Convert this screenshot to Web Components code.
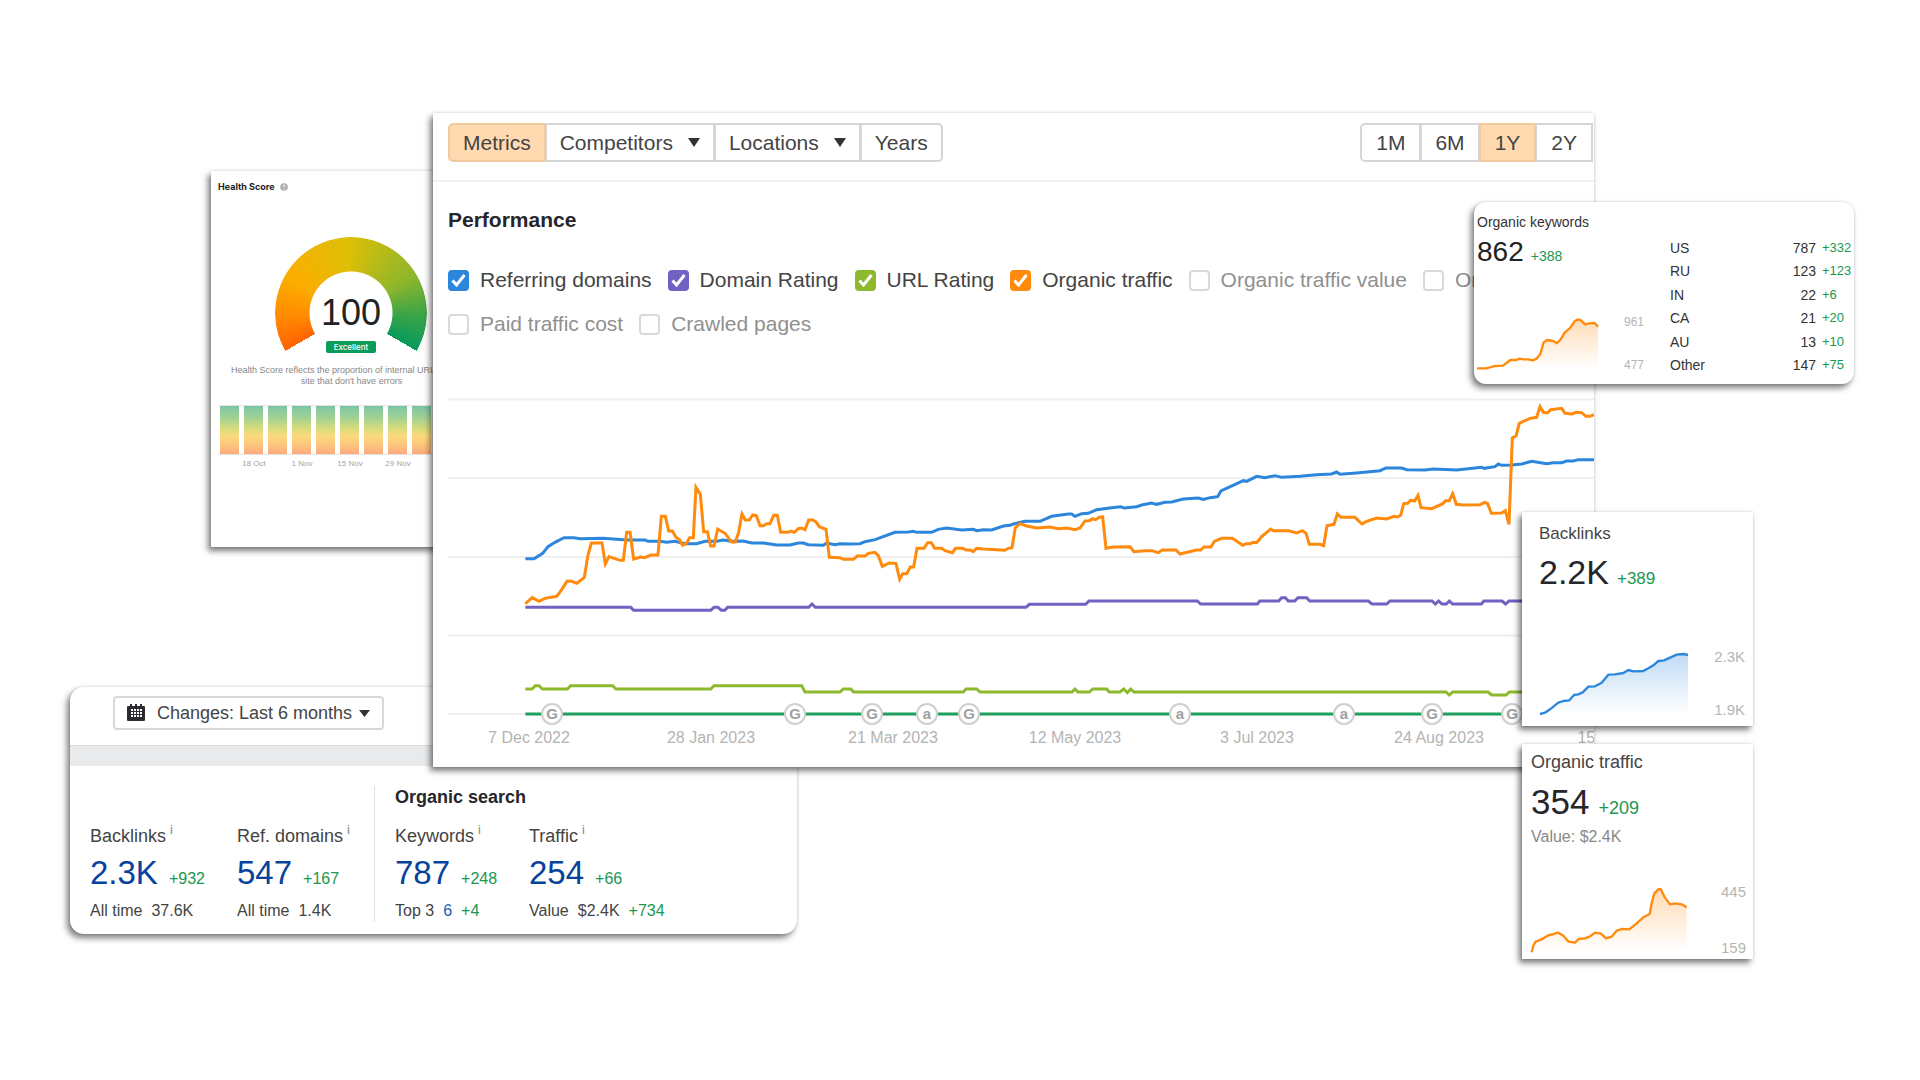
<!DOCTYPE html>
<html lang="en">
<head>
<meta charset="utf-8">
<title>SEO performance overview</title>
<style>
  html, body { margin: 0; min-height: 100%; background: #fff; }
  body { font-family: "Liberation Sans", Arial, sans-serif; color: #444; }
</style>
</head>
<body>
<report-collage>
  <health-card slot="health"></health-card>
  <summary-card slot="summary">
    <metric-group>
      <metric-item label="Backlinks" value="2.3K" delta="+932"><span>All time</span><span>37.6K</span></metric-item>
      <metric-item label="Ref. domains" value="547" delta="+167"><span>All time</span><span>1.4K</span></metric-item>
    </metric-group>
    <metric-group divided heading="Organic search">
      <metric-item label="Keywords" value="787" delta="+248"><span>Top 3</span><a href="#top">6</a><span class="up">+4</span></metric-item>
      <metric-item label="Traffic" value="254" delta="+66"><span>Value</span><span>$2.4K</span><span class="up">+734</span></metric-item>
    </metric-group>
  </summary-card>
  <performance-card slot="performance"></performance-card>
  <keywords-card slot="keywords"></keywords-card>
  <trend-card slot="backlinks" class="backlinks" label="Backlinks" value="2.2K" delta="+389" high="2.3K" low="1.9K">
    <spark-line color="#2b86dc" box="117 447 450 207" base="640"
      points="120,642 135,638 150,628 175,608 190,603 208,601 222,585 235,583 248,577 265,560 285,559 305,548 325,524 345,523 370,519 385,510 400,514 430,513 445,505 460,496 475,483 492,481 530,464 550,462 564,465"></spark-line>
  </trend-card>
  <trend-card slot="traffic" class="traffic" label="Organic traffic" value="354" delta="+209" note="Value: $2.4K" high="445" low="159">
    <spark-line color="#ff8a0c" box="93 462 480 216" base="667"
      points="95,667 100,647 107,635 125,628 143,617 175,608 190,617 206,635 225,638 236,627 255,625 270,619 285,608 303,611 318,625 335,620 350,602 365,597 388,598 410,580 430,562 449,552 455,520 463,490 475,478 482,477 495,503 510,523 525,520 545,523 560,532"></spark-line>
  </trend-card>
</report-collage>

<script>
const define = (name, render) => customElements.define(name, class extends HTMLElement {
  connectedCallback() {
    if (this.shadowRoot) return;
    this.attachShadow({ mode: 'open' }).innerHTML = render(this);
  }
});
const attr = (el, name) => el.getAttribute(name) || '';

/* Free canvas on which the report cards overlap */
define('report-collage', () => `
  <style>
    :host { display: block; position: relative; min-height: 100vh; overflow: hidden; }
    ::slotted(*) {
      position: absolute; box-sizing: border-box; background: #fff;
      box-shadow: -3px 4px 6px rgba(0,0,0,.5), 0 0 3px rgba(0,0,0,.14);
    }
    ::slotted(health-card) { left: 211px; top: 171px; width: 280px; height: 376px; }
    ::slotted(summary-card) { left: 70px; top: 687px; width: 727px; border-radius: 14px; }
    ::slotted(performance-card) { left: 433px; top: 113px; width: 1161px; }
    ::slotted(keywords-card) { left: 1474px; top: 202px; width: 380px; height: 182px; border-radius: 12px; }
    ::slotted(.backlinks) { left: 1522px; top: 512px; width: 231px; height: 214px; }
    ::slotted(.traffic) { left: 1522px; top: 744px; width: 231px; height: 215px; }
  </style>
  <slot name="health"></slot><slot name="summary"></slot><slot name="performance"></slot>
  <slot name="keywords"></slot><slot name="backlinks"></slot><slot name="traffic"></slot>`);

/* Small area chart; its units are a third of a pixel */
define('spark-line', el => {
  const [x, y, w, h] = attr(el, 'box').split(' ').map(Number);
  const pts = attr(el, 'points').split(' ');
  const first = pts[0].split(',')[0], last = pts[pts.length - 1].split(',')[0];
  const base = attr(el, 'base'), color = attr(el, 'color');
  return `
  <style>:host { display: block; } svg { display: block; overflow: visible; }</style>
  <svg width="${w / 3}" height="${h / 3}" viewBox="${x} ${y} ${w} ${h}" aria-hidden="true">
    <defs><linearGradient id="f" x1="0" y1="0" x2="0" y2="1">
      <stop offset="0" stop-color="${color}" stop-opacity=".3"/>
      <stop offset="1" stop-color="${color}" stop-opacity="0"/>
    </linearGradient></defs>
    <polygon fill="url(#f)" points="${first},${base} ${pts.join(' ')} ${last},${base}"/>
    <polyline fill="none" stroke="${color}" stroke-width="7" stroke-linejoin="round" points="${pts.join(' ')}"/>
  </svg>`;
});

define('health-card', () => `
  <style>
    :host { display: block; padding: 10px 0 0 7px; color: #888; font-size: 9px; }
    header { display: flex; align-items: center; gap: 5px; height: 12px; }
    h2 { margin: 0; font: 700 9px/12px Inter, sans-serif; color: #222; }
    .gauge { width: 152px; height: 126px; margin: 44px 0 0 57px; display: grid; }
    .arc {
      grid-area: 1/1; width: 152px; height: 152px; border-radius: 50%;
      background: conic-gradient(from 240deg, #ff6400 0deg, #ff8c00 28deg, #fbae00 60deg, #dcbf06 118deg, #8db62c 180deg, #3ba447 212deg, #069a5d 240deg, transparent 240deg);
      -webkit-mask: radial-gradient(circle, transparent 41px, #000 42px);
      mask: radial-gradient(circle, transparent 41px, #000 42px);
    }
    .read { grid-area: 1/1; display: flex; flex-direction: column; align-items: center; padding-top: 56px; }
    .read b { font: 400 36px/40px "Liberation Sans", sans-serif; color: #222; }
    .read span { margin-top: 8px; width: 50px; background: #0b9b5a; border-radius: 2px; color: #fff; font: 500 8px/12px Inter, sans-serif; text-align: center; }
    p { margin: 0 0 0 12px; width: 243px; line-height: 11px; text-align: center; padding-top: 2px; }
    .bars { display: flex; gap: 5px; height: 48px; margin-top: 18px; padding-left: 2px; border: solid #e4e4e4; border-width: 1px 0; }
    .bars i { width: 19px; background: linear-gradient(#7ac5a5, #a3d191 25%, #dedc7c 50%, #fbda7d 62%, #fcc77c 80%, #fca97c); }
    .days { display: flex; font-size: 8px; line-height: 10px; color: #a4a4a4; margin: 4px 0 0 12px; }
    .days span { width: 48px; text-align: center; }
  </style>
  <header><h2>Health Score</h2>
    <svg width="8" height="8" viewBox="0 0 16 16"><circle cx="8" cy="8" r="7.5" fill="#aaa"/><path d="M5.6 6.4q0-2.4 2.4-2.4t2.4 2.1q0 1.300-1.500 2T8 10" fill="none" stroke="#fff" stroke-width="1.700"/><circle cx="8" cy="12.200" r="1.100" fill="#fff"/></svg>
  </header>
  <div class="gauge"><div class="arc"></div><div class="read"><b>100</b><span>Excellent</span></div></div>
  <p>Health Score reflects the proportion of internal URLs on your site that don't have errors</p>
  <div class="bars">${'<i></i>'.repeat(11)}</div>
  <div class="days"><span>18 Oct</span><span>1 Nov</span><span>15 Nov</span><span>29 Nov</span></div>`);

define('summary-card', () => `
  <style>
    :host { display: block; }
    .top { padding: 9px 0 15px 43px; }
    button {
      display: flex; align-items: center; height: 34px; padding: 0 12px; box-sizing: border-box;
      border: 2px solid #d8d8d8; border-radius: 4px; background: #fff; color: #444;
      font: 18px/20px "Liberation Sans", sans-serif;
    }
    .cal { margin-right: 12px; }
    .caret { margin-left: 7px; }
    .band { height: 21px; background: #e8eaec; border-top: 1px solid #dcdede; box-sizing: border-box; }
    .body { display: flex; padding: 20px 20px 12px; }
  </style>
  <div class="top"><button type="button" aria-haspopup="listbox">
    <svg class="cal" width="18" height="18" viewBox="0 0 18 18"><path fill="#2b2b30" d="M1 2h2V0h2v2h3V0h2v2h3V0h2v2h2a1 1 0 0 1 1 1v13a1 1 0 0 1-1 1H1a1 1 0 0 1-1-1V3a1 1 0 0 1 1-1z"/><path fill="#fff" d="M3 5h12v9H3z"/><path stroke="#2b2b30" d="M3.500 5v9M6.500 5v9M9.500 5v9M12.500 5v9M3 7.500h12M3 10.500h12M3 13.500h12"/></svg>
    Changes: Last 6 months
    <svg class="caret" width="11" height="7"><path d="M0 0h11L5.500 7z" fill="#333"/></svg>
  </button></div>
  <div class="band"></div>
  <div class="body"><slot></slot></div>`);

define('metric-group', el => `
  <style>
    :host { display: flex; flex-direction: column; min-height: 136px; }
    :host([divided]) { border-left: 1px solid #dedede; padding-left: 20px; }
    h3 { margin: 1px 0 19px; height: 20px; font-size: 18px; line-height: 20px; color: #26262b; }
    .row { display: grid; grid-template-columns: 147px 137px; }
    :host([divided]) .row { grid-template-columns: 134px auto; }
  </style>
  ${attr(el, 'heading') ? `<h3>${attr(el, 'heading')}</h3>` : '<h3 aria-hidden="true"></h3>'}
  <div class="row"><slot></slot></div>`);

define('metric-item', el => `
  <style>
    :host { display: block; font-size: 16px; line-height: 20px; white-space: nowrap; }
    .label { font-size: 18px; line-height: 20px; }
    sup { font-size: 13px; line-height: 0; vertical-align: 8px; margin-left: 4px; color: #888; }
    .val { display: flex; align-items: baseline; gap: 11px; margin: 9px 0 10px; height: 36px; }
    .val a { font-size: 33px; line-height: 36px; color: #07429c; text-decoration: none; }
    .val span { color: #1a9850; }
    .foot { display: flex; gap: 9px; }
    ::slotted(a) { color: #1a5fb4; text-decoration: none; }
    ::slotted(.up) { color: #1a9850; }
  </style>
  <div class="label">${attr(el, 'label')}<sup>i</sup></div>
  <div class="val"><a href="#${attr(el, 'label')}">${attr(el, 'value')}</a><span>${attr(el, 'delta')}</span></div>
  <div class="foot"><slot></slot></div>`);

define('trend-card', el => `
  <style>
    :host { display: flex; flex-direction: column; font-size: 17px; line-height: 20px; padding: 12px 8px 8px 17px; }
    .val { display: flex; align-items: baseline; gap: 8px; margin-top: 8px; height: 40px; }
    b { font-weight: 400; font-size: 34px; line-height: 40px; color: #26262b; }
    .val span { color: #1a9850; }
    .note { font-size: 16px; color: #888; margin-top: 5px; }
    .foot { display: flex; justify-content: space-between; margin-top: auto; }
    .scale { display: flex; flex-direction: column; justify-content: space-between; font-size: 15px; line-height: 16px; color: #b5b5b5; }
    :host(.traffic) { font-size: 18px; padding: 8px 7px 3px 9px; }
    :host(.traffic) .val { margin-top: 10px; gap: 9px; }
    :host(.traffic) b { font-size: 35px; }
  </style>
  <div>${attr(el, 'label')}</div>
  <div class="val"><b>${attr(el, 'value')}</b><span>${attr(el, 'delta')}</span></div>
  ${attr(el, 'note') ? `<div class="note">${attr(el, 'note')}</div>` : ''}
  <div class="foot"><slot></slot><div class="scale"><span>${attr(el, 'high')}</span><span>${attr(el, 'low')}</span></div></div>`);

const countries = [['US', 787, 332], ['RU', 123, 123], ['IN', 22, 6], ['CA', 21, 20], ['AU', 13, 10], ['Other', 147, 75]];
define('keywords-card', () => `
  <style>
    :host { display: flex; font-size: 14px; line-height: 16px; color: #333; }
    section { display: flex; flex-direction: column; padding: 12px 0 12px 3px; width: 167px; }
    .val { display: flex; align-items: baseline; gap: 7px; margin-top: 6px; height: 32px; }
    b { font-weight: 400; font-size: 28px; line-height: 32px; color: #222; }
    .up { color: #1a9850; }
    .foot { display: flex; justify-content: space-between; margin-top: auto; }
    .scale { display: flex; flex-direction: column; justify-content: space-between; font-size: 12px; line-height: 14px; color: #b5b5b5; }
    table { flex: 1; margin: 34px 0 0 26px; height: 141px; border-collapse: collapse; }
    th, td { padding: 0; font-weight: 400; text-align: left; }
    .n { text-align: right; padding-right: 6px; }
    td.up { width: 32px; font-size: 13px; }
  </style>
  <section>
    <div>Organic keywords</div>
    <div class="val"><b>862</b><span class="up">+388</span></div>
    <div class="foot">
      <spark-line color="#ff8a0c" box="52 375 366 171" base="535"
        points="52,535 80,535 105,528 130,527 152,510 170,510 180,506 190,508 205,508 220,511 232,505 242,492 252,457 262,450 280,453 292,460 303,448 315,428 330,415 345,394 352,389 362,390 377,403 390,400 405,399 415,410"></spark-line>
      <div class="scale"><span>961</span><span>477</span></div>
    </div>
  </section>
  <table><tbody>${countries.map(([c, n, d]) => `<tr><th scope="row">${c}</th><td class="n">${n}</td><td class="up">+${d}</td></tr>`).join('')}</tbody></table>`);

define('segment-bar', () => `
  <style>:host { display: flex; }</style><slot></slot>`);

define('segment-button', el => `
  <style>
    :host { display: block; margin-left: -1px; }
    :host(:first-child) { margin-left: 0; }
    button {
      display: flex; align-items: center; gap: 15px; height: 39px; box-sizing: border-box;
      padding: 0 13px; border: 2px solid #d6d6d6; background: #fff; color: #444;
      font: 21px/24px "Liberation Sans", sans-serif;
    }
    :host(:first-child) button { border-radius: 5px 0 0 5px; }
    :host([end]) button { border-radius: 0 5px 5px 0; }
    :host([on]) { z-index: 1; position: relative; }
    :host([on]) button { background: #ffd9b0; border-color: #f3caa0; }
    :host([wide]) button { padding: 0 14px; }
  </style>
  <button type="button"><slot></slot>${el.hasAttribute('menu') ? '<svg width="12" height="9"><path d="M0 0h12L6 9z" fill="#333"/></svg>' : ''}</button>`);

define('series-toggle', el => {
  const color = attr(el, 'color');
  return `
  <style>
    :host { display: block; }
    label { display: flex; align-items: center; gap: 11px; font-size: 21px; line-height: 24px; color: ${color ? '#444' : '#909090'}; white-space: nowrap; }
    .box { display: grid; }
    input { grid-area: 1/1; appearance: none; margin: 0; width: 21px; height: 21px; box-sizing: border-box; border-radius: 4px; border: 2px solid #d9d9d9; background: #fff; }
    input:checked { background: ${color}; border-color: ${color}; }
    svg { grid-area: 1/1; pointer-events: none; }
  </style>
  <label><span class="box"><input type="checkbox" ${color ? 'checked' : ''}>${color ? '<svg width="21" height="21"><path d="M4.500 10.500l4 4.500 8-10" fill="none" stroke="#fff" stroke-width="3"/></svg>' : ''}</span><slot></slot></label>`;
});

const series = [
  ['#7261c3', '286,682 602,682 611,691 842,691 852,682 864,682 874,691 884,691 893,682 1136,682 1146,672 1156,682 1788,682 1798,673 1967,673 1977,663 2302,663 2312,672 2482,672 2490,663 2546,663 2555,653 2566,653 2575,663 2594,663 2604,653 2630,653 2639,663 2815,663 2826,672 2870,672 2880,663 3006,663 3016,672 3026,663 3036,672 3049,672 3058,663 3068,672 3154,672 3162,663 3216,663 3227,672 3237,663 3300,663'],
  ['#8db92e', '286,927 306,927 316,917 327,917 337,927 412,927 422,917 548,917 558,927 842,927 852,917 1115,917 1125,936 1230,936 1240,927 1262,927 1271,936 1600,936 1608,927 1640,927 1650,936 1926,936 1935,927 1944,936 1978,936 1988,927 2030,927 2038,936 2070,936 2081,927 2092,938 2102,927 2112,936 3048,936 3058,945 3068,936 3174,936 3185,945 3228,945 3238,936 3300,936'],
  ['#1f9f5d', '286,1002 3300,1002'],
  ['#2b86dc', '286,536 312,536 338,520 354,500 375,487 402,473 432,473 450,476 520,475 590,480 645,480 655,484 690,484 710,487 735,484 765,491 800,491 825,484 860,484 880,480 905,484 940,483 965,489 1000,489 1040,495 1080,495 1105,489 1120,489 1135,494 1180,496 1190,489 1215,494 1230,491 1260,492 1290,491 1305,485 1335,479 1395,457 1435,456 1450,454 1460,457 1505,457 1525,448 1550,444 1595,450 1630,448 1640,452 1660,449 1685,450 1720,438 1740,436 1750,432 1785,424 1830,424 1865,409 1915,402 1925,402 1935,409 1955,401 1975,400 2000,389 2045,383 2072,380 2082,384 2120,380 2135,375 2165,369 2180,373 2205,367 2225,366 2260,357 2305,354 2320,358 2340,353 2363,350 2373,333 2440,302 2450,304 2480,289 2505,293 2535,287 2555,292 2610,289 2660,284 2705,282 2720,276 2730,283 2780,279 2850,272 2868,264 2915,264 2930,269 2985,270 3010,267 3080,270 3155,262 3162,265 3195,260 3205,252 3215,256 3245,255 3275,252 3305,244 3350,251 3370,248 3395,248 3410,243 3430,243 3445,239 3492,239'],
  ['#ff8a0c', '286,671 307,653 327,664 345,655 380,649 393,632 411,604 425,604 440,610 463,592 474,525 484,489 516,489 526,552 537,530 570,541 580,541 590,457 600,457 611,537 632,531 643,533 663,525 684,525 694,409 706,409 716,453 727,453 738,472 748,479 758,496 769,490 779,473 790,473 798,322 811,343 821,455 832,455 842,498 852,498 863,447 885,460 905,486 916,486 926,457 936,402 946,420 958,420 968,405 979,407 990,437 1000,437 1010,431 1020,431 1031,406 1042,406 1052,457 1073,457 1083,453 1093,457 1105,446 1115,444 1125,449 1136,420 1148,420 1158,426 1168,440 1188,448 1198,532 1230,533 1240,538 1270,538 1282,528 1305,528 1315,520 1335,517 1345,527 1357,559 1378,549 1398,550 1409,598 1418,581 1430,581 1441,561 1451,561 1461,505 1482,505 1493,488 1504,488 1514,505 1535,505 1545,512 1567,518 1577,505 1598,505 1608,510 1620,510 1630,515 1640,505 1660,507 1725,511 1735,505 1746,503 1756,443 1770,431 1790,438 1820,444 1860,441 1885,446 1910,444 1935,449 1950,444 1965,423 1978,422 1987,416 1997,419 2008,412 2018,411 2028,505 2050,501 2100,500 2112,515 2145,512 2165,512 2185,518 2197,510 2238,510 2250,522 2300,510 2312,510 2322,501 2343,501 2353,484 2375,475 2407,475 2438,496 2448,491 2460,491 2470,487 2480,488 2495,470 2522,447 2530,452 2575,452 2600,459 2618,452 2628,460 2638,493 2670,493 2681,497 2691,437 2712,433 2722,402 2733,412 2775,412 2796,432 2810,424 2840,414 2870,417 2892,409 2902,411 2912,406 2921,371 2933,370 2942,361 2954,363 2964,346 2973,383 3005,386 3037,372 3047,362 3058,362 3068,341 3079,373 3100,375 3150,374 3164,367 3173,371 3184,400 3215,399 3226,392 3237,433 3247,174 3258,168 3268,130 3300,115 3320,112 3330,80 3340,97 3352,99 3362,89 3395,85 3405,100 3427,102 3437,97 3455,98 3468,109 3480,109 3492,104'],
];
/* Search engine updates marked on the time axis */
const events = [[104, 'G'], [347, 'G'], [424, 'G'], [479, 'a'], [521, 'G'], [732, 'a'], [896, 'a'], [984, 'G'], [1064, 'G']];
const dates = ['7 Dec 2022', '28 Jan 2023', '21 Mar 2023', '12 May 2023', '3 Jul 2023', '24 Aug 2023', '15 Oct 2023'];

define('performance-chart', () => `
  <style>
    :host { display: block; overflow: hidden; }
    svg { display: block; }
    text { font: bold 15px "Liberation Sans", sans-serif; fill: #a0a0a0; text-anchor: middle; }
    .dates { display: flex; margin-left: -10px; font-size: 16px; line-height: 22px; color: #b4b4b4; }
    .dates span { flex: 0 0 182px; text-align: center; }
  </style>
  <svg width="1146" height="347" viewBox="0 0 1146 347" role="img" aria-label="Performance over time">
    <path d="M0 19.500h1146M0 98h1146M0 177h1146M0 255.500h1146M0 334h77" stroke="#efefef" stroke-width="2" fill="none"/>
    <g transform="translate(-18 0) scale(.33333)" fill="none" stroke-width="9" stroke-linejoin="miter">
      ${series.map(([c, p]) => `<polyline stroke="${c}" points="${p}"/>`).join('')}
    </g>
    ${events.map(([x, t]) => `<circle cx="${x}" cy="334" r="10" fill="#fff" stroke="#cfcfcf" stroke-width="2"/><text x="${x}" y="339">${t}</text>`).join('')}
  </svg>
  <div class="dates">${dates.map(d => `<span>${d}</span>`).join('')}</div>`);

define('performance-card', () => `
  <style>
    :host { display: block; }
    header { display: flex; justify-content: space-between; padding: 10px 1px 18px 15px; border-bottom: 2px solid #f0f0f0; }
    .body { padding: 26px 0 18px 15px; }
    h2 { margin: 0 0 36px; font-size: 21px; line-height: 24px; color: #26262b; }
    .toggles { display: flex; flex-wrap: wrap; gap: 20px 16px; margin: 0 -32px 44px 0; }
  </style>
  <header>
    <segment-bar>
      <segment-button on>Metrics</segment-button><segment-button menu>Competitors</segment-button><segment-button menu>Locations</segment-button><segment-button end>Years</segment-button>
    </segment-bar>
    <segment-bar>
      <segment-button wide>1M</segment-button><segment-button>6M</segment-button><segment-button on wide>1Y</segment-button><segment-button wide>2Y</segment-button>
    </segment-bar>
  </header>
  <div class="body">
    <h2>Performance</h2>
    <div class="toggles">
      <series-toggle color="#2b86dc">Referring domains</series-toggle>
      <series-toggle color="#7261c3">Domain Rating</series-toggle>
      <series-toggle color="#8db92e">URL Rating</series-toggle>
      <series-toggle color="#ff8a0c">Organic traffic</series-toggle>
      <series-toggle>Organic traffic value</series-toggle>
      <series-toggle>Organic pages</series-toggle>
      <series-toggle>Paid traffic cost</series-toggle>
      <series-toggle>Crawled pages</series-toggle>
    </div>
    <performance-chart></performance-chart>
  </div>`);
</script>
</body>
</html>
